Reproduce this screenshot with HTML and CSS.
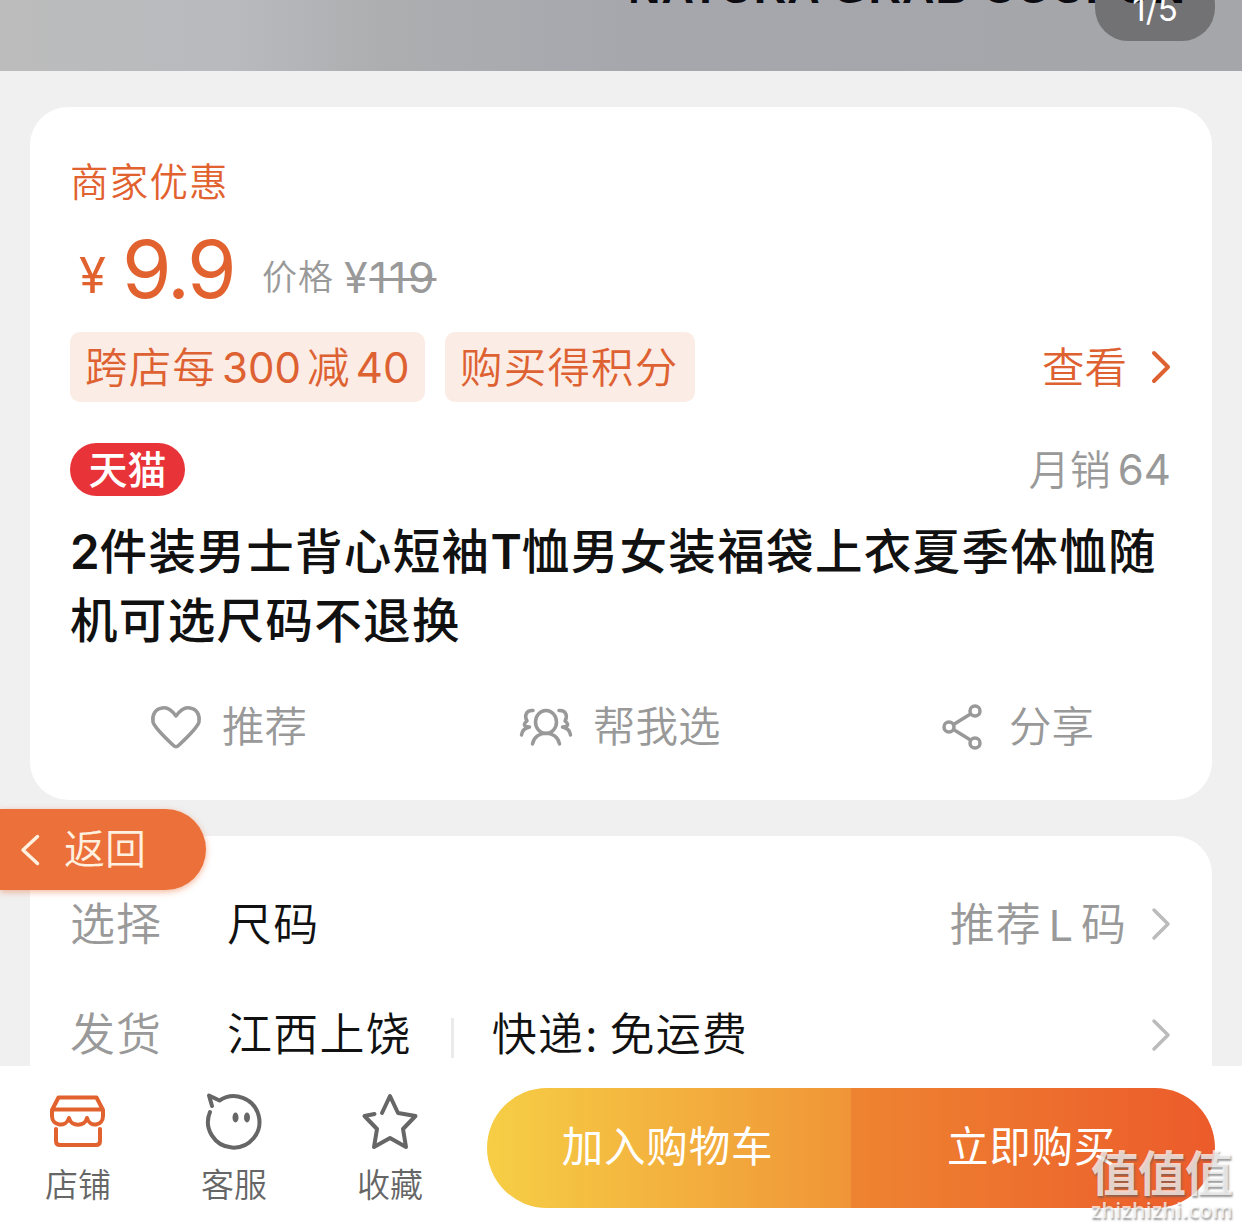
FILE: index.html
```html
<!DOCTYPE html>
<html lang="zh-CN">
<head>
<meta charset="utf-8">
<title>商品详情</title>
<link rel="stylesheet" href="styles.css">
</head>
<body>
<div class="page">
  <header class="gallery">
    <div class="gallery-caption">NATURA GRAB COUPON</div>
    <div class="gallery-count">1/5</div>
  </header>

  <main class="content">
    <section class="card product">
      <div class="promo">商家优惠</div>
      <div class="price-row">
        <span class="yen">¥</span>
        <span class="price">9.9</span>
        <span class="old-label">价格</span>
        <span class="old-price"><span class="old-yen">¥</span><s>119</s></span>
      </div>
      <div class="tags">
        <span class="tag tag-wide">跨店每<span class="num">300</span>减<span class="num num-last">40</span></span>
        <span class="tag">购买得积分</span>
        <a class="view"><span>查看</span>
          <svg width="20" height="34" viewBox="0 0 20 34"><path d="M2 3 16 17 2 31"/></svg>
        </a>
      </div>
      <div class="shop-row">
        <span class="tmall">天猫</span>
        <span class="sales">月销<span class="num">64</span></span>
      </div>
      <h1 class="title"><span class="line"><span class="latin">2</span>件装男士背心短袖<span class="latin">T</span>恤男女装福袋上衣夏季体恤随</span><span class="line">机可选尺码不退换</span></h1>
      <div class="actions">
        <a class="action action-like">
          <svg width="50" height="44" viewBox="0 0 50 44"><path d="M25 11C20 4 15 2 11 3 4 4 1 10 2 17 3 21 7 26 22.500 40.500Q25 43 27.500 40.500C43 26 47 21 48 17 49 10 46 4 39 3 35 2 30 4 25 11Z"/></svg>
          <span>推荐</span>
        </a>
        <a class="action action-pick">
          <svg width="52" height="40" viewBox="0 0 52 40"><ellipse cx="26" cy="15" rx="10.5" ry="11.500"/><path d="M12.500 37C15 22.500 37 22.500 39.500 37M13 3.500C6 3 4 9 7 14 2 18 5 20 9.500 20 5 21 2 24 1.500 28M39 3.500C46 3 48 9 45 14 50 18 47 20 42.500 20 47 21 50 24 50.500 28"/></svg>
          <span>帮我选</span>
        </a>
        <a class="action action-share">
          <svg width="40" height="46" viewBox="0 0 40 46"><circle cx="7" cy="23" r="5"/><circle cx="33" cy="7" r="5"/><circle cx="33" cy="39" r="5"/><path d="M11.500 20.500 28.500 10M11.500 25.500 28.500 36"/></svg>
          <span>分享</span>
        </a>
      </div>
    </section>

    <section class="card options">
      <div class="option">
        <span class="option-name">选择</span>
        <span class="option-value">尺码</span>
        <span class="option-hint">推荐<span class="hint-latin">L</span>码</span>
        <svg class="more" width="20" height="34" viewBox="0 0 20 34"><path d="M2 3 16 17 2 31"/></svg>
      </div>
      <div class="option">
        <span class="option-name">发货</span>
        <span class="option-value">江西上饶</span>
        <span class="rule"></span>
        <span class="option-value">快递<span class="colon">:</span>免运费</span>
        <svg class="more" width="20" height="34" viewBox="0 0 20 34"><path d="M2 3 16 17 2 31"/></svg>
      </div>
    </section>
  </main>

  <footer class="bar">
    <a class="nav nav-shop">
      <svg width="56" height="58" viewBox="0 0 56 58"><path d="M8.500 5.500H46.500L53 18V24C53 34 40 36 37 26 35 35 21 35 19 26 16 36 2 34 2 24V18ZM2.500 17.500H52.500M6 37V49Q6 53 10 53H46Q50 53 50 49V37"/></svg>
      <span>店铺</span>
    </a>
    <a class="nav">
      <svg width="56" height="58" viewBox="0 0 56 58"><path d="M4 20A25.700 25.700 0 1 0 13.500 8.500L3 3.500 6 14"/><ellipse class="eye" cx="29.500" cy="25.500" rx="3" ry="5"/><ellipse class="eye" cx="41" cy="25.500" rx="3" ry="5"/></svg>
      <span>客服</span>
    </a>
    <a class="nav">
      <svg width="56" height="58" viewBox="0 0 56 58"><path d="M20 21 28 4 36 21 53.500 24 41 37 44 55 28 46 12 55 15 37 2.500 24 12.500 22"/></svg>
      <span>收藏</span>
    </a>
    <div class="buy">
      <button class="btn btn-cart">加入购物车</button>
      <button class="btn btn-now">立即购买</button>
    </div>
  </footer>

  <a class="back">
    <svg width="20" height="32" viewBox="0 0 20 32"><path d="M17.500 2.500 3 16 17.500 29.500"/></svg>
    <span>返回</span>
  </a>
  <div class="stamp"><div class="stamp-name">值值值</div><div class="stamp-site">zhizhizhi.com</div></div>
</div>
</body>
</html>
```
FILE: styles.css
```css
* { box-sizing: border-box; }
body {
  margin: 0;
  font-family: "Noto Sans CJK SC", sans-serif;
  font-weight: 350;
  background: #f0f0f0;
}
.page {
  position: relative;
  display: flex;
  flex-direction: column;
  width: 1242px;
  height: 1229px;
  overflow: hidden;
}
svg {
  flex: none;
  display: block;
  overflow: visible;
  fill: none;
  stroke: currentColor;
  stroke-width: 4;
  stroke-linecap: round;
  stroke-linejoin: round;
}
.num, .price, .yen, .old-price, .latin, .hint-latin, .gallery-count {
  font-family: Inter, "Liberation Sans", sans-serif;
  font-weight: 400;
}

.gallery {
  position: relative;
  flex: none;
  height: 71px;
  overflow: hidden;
  background: linear-gradient(90deg, #bcbcbc 0, #b8babe 230px, #acaeb0 380px, #a6a7ad 640px, #a5a6a9 100%);
}
.gallery-caption {
  position: absolute;
  left: 628px;
  top: -40px;
  font: 700 45px/56px "Liberation Sans", sans-serif;
  letter-spacing: 1px;
  white-space: nowrap;
  color: #0c0c12;
}
.gallery-count {
  position: absolute;
  left: 1095px;
  top: -28px;
  width: 120px;
  height: 69px;
  border-radius: 33px;
  background: rgba(0, 0, 0, .31);
  color: #fff;
  font-size: 33px;
  line-height: 74px;
  text-align: center;
}

.content {
  flex: 1;
  min-height: 0;
  display: flex;
  flex-direction: column;
  gap: 36px;
  padding: 36px 30px 0;
  overflow: hidden;
}
.card {
  flex: none;
  padding: 0 40px;
  border-radius: 38px;
  background: #fff;
}
.product { height: 693px; padding-top: 47px; }
.promo {
  height: 50px;
  line-height: 50px;
  font-size: 38.500px;
  letter-spacing: 1.200px;
  color: #e2622f;
}
.price-row {
  display: flex;
  align-items: baseline;
  height: 100px;
  margin-top: 15px;
  margin-bottom: 13px;
  line-height: 100px;
  color: #e2622f;
}
.yen, .old-label, .old-price { position: relative; }
.yen { top: -5px; width: 52px; padding-left: 9px; font-size: 49px; }
.price { width: 140px; font-size: 80px; letter-spacing: -2.500px; }
.old-label { top: -8px; width: 82px; font-size: 35px; letter-spacing: 1px; color: #999; }
.old-price { top: -5px; font-size: 43px; letter-spacing: 1.800px; color: #999; }
.old-price s { text-decoration-thickness: 3px; }
.tags { display: flex; align-items: center; gap: 20px; height: 70px; }
.tag {
  width: 250px;
  height: 70px;
  padding-left: 15px;
  border-radius: 10px;
  background: #fbece5;
  color: #de6132;
  font-size: 42.500px;
  line-height: 65px;
  letter-spacing: 1.200px;
  white-space: nowrap;
}
.tag-wide { width: 355px; }
.tag .num { margin: 0 6px; font-size: 42px; letter-spacing: 0; }
.tag .num-last { margin-left: 5px; }
.view {
  display: flex;
  align-items: center;
  gap: 25px;
  margin-left: auto;
  font-size: 42.500px;
  color: #de6132;
}
.view span { padding-bottom: 6px; }
.shop-row {
  display: flex;
  align-items: center;
  justify-content: space-between;
  height: 53px;
  margin-top: 41px;
}
.tmall {
  width: 115px;
  height: 53px;
  border-radius: 27px;
  background: #e83338;
  color: #fff;
  font-size: 39px;
  font-weight: 500;
  line-height: 49px;
  text-align: center;
}
.sales { height: 53px; padding-right: 1px; font-size: 41px; line-height: 49px; color: #999; white-space: nowrap; }
.sales .num { margin-left: 7px; font-size: 42px; }
.title {
  margin: 18px 0 0;
  font-size: 47.500px;
  font-weight: 500;
  line-height: 69px;
  letter-spacing: 1.350px;
  color: #111;
}
.line { display: block; height: 69px; white-space: nowrap; }
.latin { font-weight: 600; line-height: 1; letter-spacing: 0; }
.actions { display: flex; height: 60px; margin-top: 45px; color: #999; }
.action { flex: none; display: flex; align-items: center; font-size: 42.500px; line-height: 56px; }
.action span { padding-bottom: 6px; }
.action svg { stroke-width: 3.500; }
.action-like { width: 370px; gap: 21px; padding-left: 81px; }
.action-pick { width: 492px; gap: 21px; padding-left: 80px; }
.action-share { gap: 27px; padding-left: 10px; }

.options { height: 300px; padding-top: 33px; }
.option {
  display: flex;
  align-items: center;
  height: 110px;
  font-size: 45px;
  line-height: 60px;
  letter-spacing: 1px;
  color: #111;
}
.option + .option { padding-top: 1px; }
.option-name, .option-value { padding-bottom: 5px; }
.option-value { letter-spacing: 1.200px; }
.option-name { width: 157px; color: #999; }
.option-hint { margin-left: auto; margin-right: 25px; padding-bottom: 1px; color: #999; }
.hint-latin { margin: 0 7px; font-size: 43px; }
.more { margin-left: auto; color: #bbb; }
.option .more { stroke-width: 3.500; }
.option-hint + .more { margin-left: 0; }
.rule { width: 3px; height: 40px; margin: 6px 38px 0 39px; background: #eaeaea; }
.colon { padding: 0 11px 0 1px; }

.bar {
  flex: none;
  display: flex;
  height: 163px;
  padding: 22px 27px 0 0;
  background: #fff;
}
.nav {
  width: 156px;
  padding-top: 4px;
  display: flex;
  flex-direction: column;
  align-items: center;
  color: #666;
  font-size: 33px;
  line-height: 50px;
}
.nav svg { margin-bottom: 8px; }
.nav-shop svg { color: #e2622f; }
.nav .eye { fill: currentColor; stroke: none; }
.buy {
  display: flex;
  width: 728px;
  height: 120px;
  margin-left: auto;
  border-radius: 60px;
  overflow: hidden;
}
.btn {
  flex: 1;
  border: 0;
  padding: 0 3px 8px 0;
  font: 400 41.500px/60px "Noto Sans CJK SC", sans-serif;
  letter-spacing: .8px;
  color: #fff;
}
.btn-cart { background: linear-gradient(90deg, #f6ce45, #f09537); }
.btn-now { background: linear-gradient(90deg, #ee8431, #ec5b2b); }

.back {
  position: absolute;
  left: 0;
  top: 809px;
  display: flex;
  align-items: center;
  gap: 24px;
  width: 206px;
  height: 81px;
  padding-left: 20px;
  border-radius: 0 41px 41px 0;
  background: #eb7039;
  box-shadow: 0 2px 6px rgba(235, 112, 57, .5);
  color: #fff0e0;
  font-size: 41px;
}
.back span { padding-bottom: 7px; }
.back svg { stroke-width: 3.500; }
.stamp {
  position: absolute;
  left: 1091px;
  top: 1142px;
  color: rgba(255, 255, 255, .72);
  text-shadow: 1px 2px 2px rgba(90, 90, 90, .6);
}
.stamp-name { font-size: 48px; font-weight: 700; line-height: 56px; letter-spacing: -1px; }
.stamp-site { font: 600 21px/24px "Open Sans", sans-serif; letter-spacing: .4px; }
```
